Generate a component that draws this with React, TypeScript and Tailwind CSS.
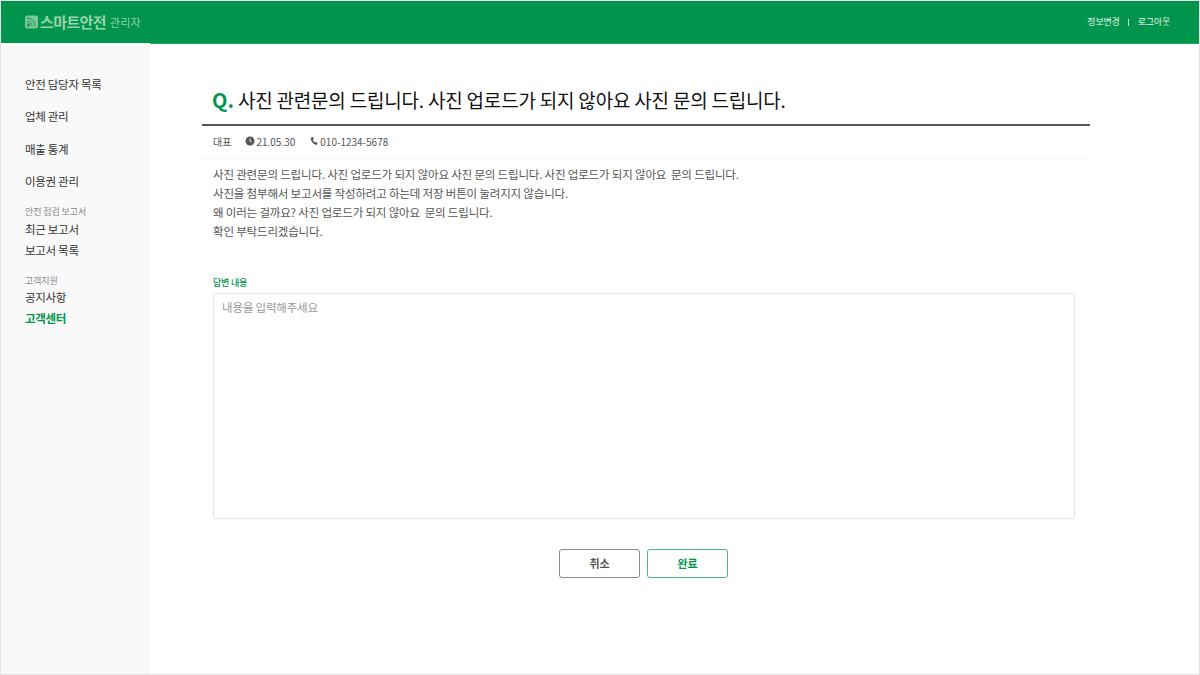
const font = { fontFamily: '"Noto Sans CJK KR", "Noto Sans", sans-serif' };

function NavItem({ label, className = "" }: { label: string; className?: string }) {
  return <div className={`text-[11.5px] leading-[18px] tracking-[-0.3px] ${className}`}>{label}</div>;
}

export default function App() {
  return (
    <div style={font} className="w-[1200px] h-[675px] overflow-hidden bg-white border border-[#e2e2e2] flex flex-col text-[#333]">
      <header className="h-[42px] shrink-0 bg-[#00944d] border-b border-b-[#1fa964] flex items-center justify-between pl-[24px] pr-[29px] box-content -mb-px">
        <div className="flex items-center">
          <svg width="13" height="14" viewBox="0 0 13 14" className="mr-[2px]">
            <rect x="0" y="0.5" width="13" height="13" rx="2" fill="#7cc595" />
            <path d="M2 3a8 8 0 0 1 8 8M2 6a5 5 0 0 1 5 5" stroke="#1c9c58" strokeWidth="1" fill="none" />
            <rect x="2" y="8.5" width="3" height="3" fill="#1c9c58" />
          </svg>
          <span className="text-[15px] leading-[20px] font-bold text-[#9ad4ac] tracking-[-0.6px]">스마트안전</span>
          <span className="ml-[4px] text-[11px] leading-[20px] text-[#8fd0a6] tracking-[0.1px]">관리자</span>
        </div>
        <div className="flex items-center text-[9px] text-[#e6f5ec] tracking-[-0.2px]">
          <span>정보변경</span>
          <span className="mx-[8.5px] w-px h-[7px] bg-[#cfe9d9]" />
          <span>로그아웃</span>
        </div>
      </header>
      <div className="flex-1 flex min-h-0">
        <aside className="w-[149px] shrink-0 bg-[#f9f9f9] pl-[24px] pt-[32px] text-[#333]">
          <div className="flex flex-col gap-[14.4px]">
            <NavItem label="안전 담당자 목록" />
            <NavItem label="업체 관리" />
            <NavItem label="매출 통계" />
            <NavItem label="이용권 관리" />
          </div>
          <div className="mt-[15.8px] text-[9px] leading-[12px] text-[#888] tracking-[-0.1px]">안전 점검 보고서</div>
          <div className="mt-[2px] flex flex-col gap-[3px]">
            <NavItem label="최근 보고서" />
            <NavItem label="보고서 목록" />
          </div>
          <div className="mt-[16px] text-[9px] leading-[12px] text-[#888] tracking-[-0.1px]">고객지원</div>
          <div className="mt-[1px] flex flex-col gap-[3px]">
            <NavItem label="공지사항" />
            <NavItem label="고객센터" className="font-bold text-[#00944d]" />
          </div>
        </aside>
        <main className="flex-1 pl-[52px] pr-[109px] pt-[41px] min-w-0">
          <div className="w-[888px]">
            <h1 className="h-[42px] pl-[11px] flex items-center text-[19px] leading-[28px] text-[#111] border-b-2 border-b-[#555] tracking-[-0.2px] font-normal whitespace-nowrap pb-[8px]">
              <span className="-ml-[1px] font-bold text-[#00944d] text-[20px] tracking-[0px] mr-[4px]">Q.</span>
              사진 관련문의 드립니다. 사진 업로드가 되지 않아요 사진 문의 드립니다.
            </h1>
            <div className="h-[33px] pl-[11px] pb-[2px] flex items-center text-[10px] text-[#555] border-b border-b-[#f3f3f3]">
              <span>대표</span>
              <span className="ml-[14px] flex items-center gap-[1px]">
                <svg width="10" height="10" viewBox="0 0 10 10"><circle cx="5" cy="5" r="4.500" fill="#555" /><path d="M5 2.500V5l1.700 1" stroke="#fff" strokeWidth="0.9" fill="none" /></svg>
                21.05.30
              </span>
              <span className="ml-[15px] flex items-center gap-[1px]">
                <svg width="9" height="10" viewBox="0 0 9 10"><path d="M1.600 1.200 3 .9l.9 2-1 .9c.3 1.100 1 2 1.900 2.600l1-.7 1.700 1.300-.5 1.300c-.3.500-1 .6-1.600.4C3 7.800 1 5.200.8 2.500c0-.6.300-1.100.8-1.300Z" fill="#555" /></svg>
                010-1234-5678
              </span>
            </div>
            <div className="pl-[11px] pt-[6px] text-[11.5px] leading-[19px] text-[#555] tracking-[-0.18px] whitespace-pre">
              <p>사진 관련문의 드립니다. 사진 업로드가 되지 않아요 사진 문의 드립니다. 사진 업로드가 되지 않아요  문의 드립니다.</p>
              <p>사진을 첨부해서 보고서를 작성하려고 하는데 저장 버튼이 눌려지지 않습니다.</p>
              <p>왜 이러는 걸까요? 사진 업로드가 되지 않아요  문의 드립니다.</p>
              <p>확인 부탁드리겠습니다.</p>
            </div>
            <div className="ml-[11px] mt-[36px] w-[862px]">
              <div className="text-[9px] leading-[12px] font-medium text-[#00944d] tracking-[-0.2px]">답변 내용</div>
              <textarea
                readOnly
                placeholder="내용을 입력해주세요"
                className="mt-[4px] block w-full h-[226px] resize-none rounded-[3px] border border-[#e4e4e4] px-[8px] py-[4px] text-[11.5px] leading-[18px] tracking-[-0.2px] outline-none placeholder:text-[#999]"
              />
              <div className="mt-[30px] flex justify-center gap-[7px] pr-[1px]">
                <button className="w-[81px] h-[29px] rounded-[3px] border border-[#8a8a8a] text-[11px] font-bold text-[#555] bg-white">취소</button>
                <button className="w-[81px] h-[29px] rounded-[3px] border border-[#4fb584] text-[11px] font-bold text-[#00944d] bg-white">완료</button>
              </div>
            </div>
          </div>
        </main>
      </div>
    </div>
  );
}
